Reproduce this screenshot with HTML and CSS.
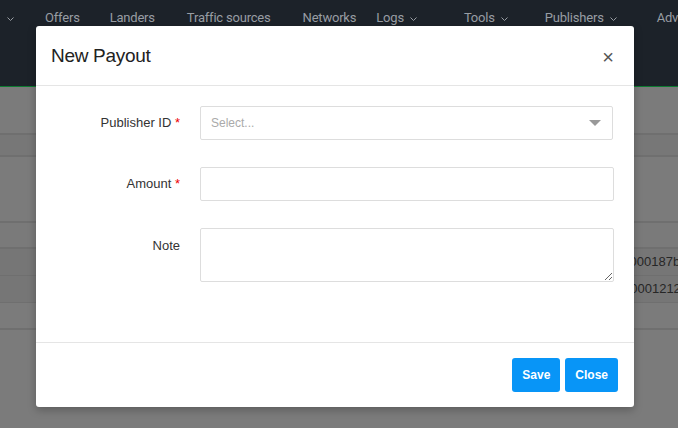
FILE: index.html
```html
<!DOCTYPE html>
<html lang="en">
<head>
  <meta charset="UTF-8" />
  <title>New Payout</title>
  <link rel="stylesheet" href="styles.css">
</head>
<body>
  <nav class="topbar">
    <span class="nav-item"><svg class="caret" viewBox="0 0 7 4"><path d="M0.5 0.5 L3.5 3.5 L6.5 0.5"/></svg></span>
    <span class="nav-item">Offers</span>
    <span class="nav-item">Landers</span>
    <span class="nav-item">Traffic sources</span>
    <span class="nav-item">Networks</span>
    <span class="nav-item">Logs <svg class="caret" viewBox="0 0 7 4"><path d="M0.5 0.5 L3.5 3.5 L6.5 0.5"/></svg></span>
    <span class="nav-item">Tools <svg class="caret" viewBox="0 0 7 4"><path d="M0.5 0.5 L3.5 3.5 L6.5 0.5"/></svg></span>
    <span class="nav-item">Publishers <svg class="caret" viewBox="0 0 7 4"><path d="M0.5 0.5 L3.5 3.5 L6.5 0.5"/></svg></span>
    <span class="nav-item">Advertisers</span>
  </nav>

  <main class="page">
    <div class="band band-top"></div>
    <div class="band band-filter"></div>
    <div class="band band-tools"></div>
    <div class="band band-head"></div>
    <div class="band band-row"><span class="cell">c000187b</span></div>
    <div class="band band-row"><span class="cell">60001212</span></div>
    <div class="band band-rest"></div>
  </main>

  <div class="modal">
    <div class="modal-header">
      <h2>New Payout</h2>
      <span class="close-x">&times;</span>
    </div>
    <form class="modal-body">
      <label class="field-label">Publisher ID <span class="req">*</span></label>
      <div class="select-box">
        <span class="placeholder">Select...</span>
        <span class="arrow"></span>
      </div>

      <label class="field-label">Amount <span class="req">*</span></label>
      <input class="text-input" type="text">

      <label class="field-label top">Note</label>
      <textarea class="text-area"></textarea>
    </form>
    <div class="modal-footer">
      <button class="btn">Save</button>
      <button class="btn">Close</button>
    </div>
  </div>
</body>
</html>
```

FILE: styles.css
```css
body {
  margin: 0;
  width: 678px;
  height: 428px;
  overflow: hidden;
  background: #7b7b7b;
  font-family: 'Liberation Sans', Arial, sans-serif;
  position: relative;
}

.topbar {
  height: 87px;
  background: #1c2229;
  border-bottom: 1px solid #0c7a30;
  display: flex;
  gap: 30px;
  padding: 9px 0 0 4px;
  box-sizing: border-box;
  white-space: nowrap;
  overflow: hidden;
  font-family: Roboto, 'Liberation Sans', sans-serif;
  font-size: 13px;
  color: #989da3;
  letter-spacing: -0.2px;
}

.nav-item {
  line-height: 18px;
}

.nav-item:nth-child(2) { margin-left: 1px; }
.nav-item:nth-child(4) { margin-left: 2px; }
.nav-item:nth-child(5) { margin-left: 2px; }
.nav-item:nth-child(6) { margin-left: -10px; }
.nav-item:nth-child(7) { margin-left: 17px; }
.nav-item:nth-child(8) { margin-left: 7px; }
.nav-item:nth-child(9) { margin-left: 10px; }

.caret {
  width: 7px;
  height: 4px;
  margin-left: 3px;
  vertical-align: 1px;
  fill: none;
  stroke: #989da3;
  stroke-width: 1;
}

.page .band {
  border-bottom: 2px solid #6f6f6f;
  box-sizing: border-box;
}

.band-top { height: 48px; background: #7b7b7b; }
.band-filter { height: 22px; background: #777; }
.band-tools { height: 66px; background: #7b7b7b; }
.band-head { height: 26px; background: #7a7a7a; }

.band-row {
  height: 27px;
  background: #767676;
  border-bottom-width: 1px !important;
  padding-left: 623px;
  font-size: 13px;
  line-height: 26px;
  color: #262626;
  white-space: nowrap;
  overflow: hidden;
}

.band-rest { height: 27px; background: #7b7b7b; }

.modal {
  position: absolute;
  top: 26px;
  left: 36px;
  width: 598px;
  background: #fff;
  border-radius: 3px;
  box-shadow: 0 3px 9px rgba(0,0,0,0.25);
}

.modal-header {
  height: 59px;
  border-bottom: 1px solid #e5e5e5;
  display: flex;
  align-items: center;
  justify-content: space-between;
  padding: 0 20px 0 15px;
}

.modal-header h2 {
  margin: 0;
  font-size: 19px;
  font-weight: normal;
  color: #222;
  letter-spacing: -0.3px;
}

.close-x {
  font-size: 20px;
  color: #555;
  line-height: 1;
  margin-top: 2px;
}

.modal-body {
  display: grid;
  grid-template-columns: 129px 413px;
  column-gap: 20px;
  row-gap: 27px;
  padding: 20px 21px 60px 15px;
  margin: 0;
}

.field-label {
  text-align: right;
  font-size: 13px;
  color: #333;
  line-height: 34px;
}

.field-label.top {
  line-height: 1;
  padding-top: 11px;
}

.req {
  color: #e00;
}

.select-box {
  height: 34px;
  box-sizing: border-box;
  border: 1px solid #ddd;
  border-radius: 2px;
  display: flex;
  align-items: center;
  justify-content: space-between;
  padding: 0 11px 0 10px;
}

.placeholder {
  font-size: 12px;
  color: #aaa;
}

.arrow {
  width: 0;
  height: 0;
  border-left: 6px solid transparent;
  border-right: 6px solid transparent;
  border-top: 6px solid #999;
}

.text-input {
  height: 34px;
  width: 414px;
  box-sizing: border-box;
  border: 1px solid #ddd;
  border-radius: 2px;
  margin: 0;
}

.text-area {
  height: 54px;
  width: 414px;
  box-sizing: border-box;
  border: 1px solid #ddd;
  border-radius: 2px;
  margin: 0;
  display: block;
}

.modal-footer {
  border-top: 1px solid #e5e5e5;
  display: flex;
  justify-content: flex-end;
  gap: 5px;
  padding: 15px 16px 15px 0;
}

.btn {
  height: 34px;
  padding: 0 10px;
  border: none;
  border-radius: 3px;
  background: #0895f7;
  color: #fff;
  font-family: 'Liberation Sans', Arial, sans-serif;
  font-size: 12px;
  font-weight: bold;
}
```
